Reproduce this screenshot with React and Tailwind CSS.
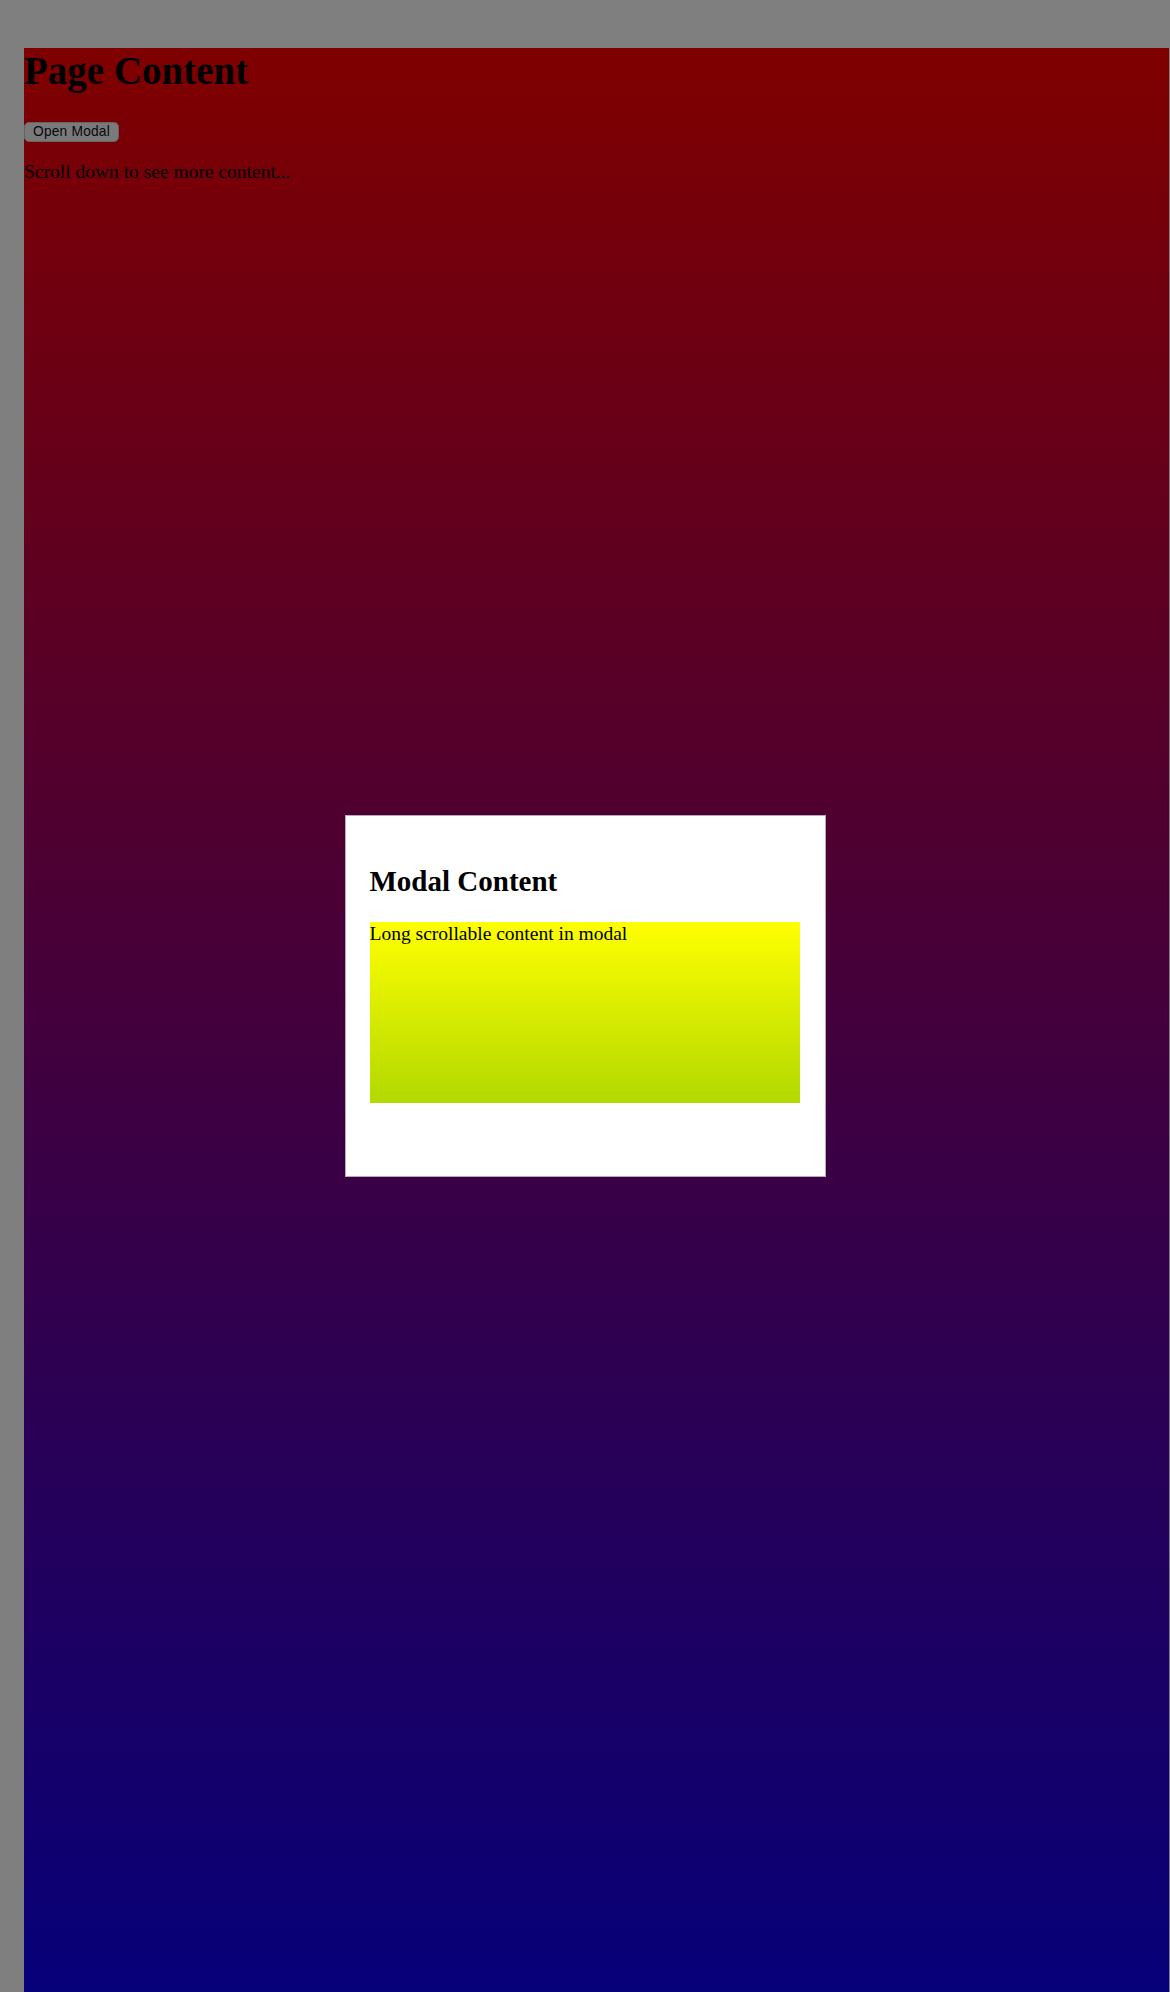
export default function App() {
  return (
    <div className="relative min-h-screen bg-white" style={{ fontFamily: '"Liberation Serif", serif' }}>
      <div className="pt-[49px] pl-[24px]">
        <div className="w-[1145px] h-[2050px] bg-[linear-gradient(to_bottom,#ff0000,#0000ff)] text-black">
          <h1 className="m-0 -mt-[1px] text-[39px] leading-[46px] font-bold" style={{ fontFamily: '"Liberation Serif", serif' }}>
            Page Content
          </h1>
          <button
            className="mt-[28px] block h-[20px] w-[95px] rounded-[5px] border border-[#c8c8c8] bg-[#f4f4f4] text-[13.75px] leading-[18px] tracking-[0.2px] text-[#111]"
            style={{ fontFamily: '"Liberation Sans", Arial, sans-serif' }}
          >
            Open Modal
          </button>
          <p className="mt-[18px] text-[19.5px] leading-[23px]" style={{ fontFamily: '"Liberation Serif", serif' }}>
            Scroll down to see more content...
          </p>
        </div>
      </div>

      <div className="fixed inset-0 flex items-center justify-center bg-black/50">
        <div className="box-border h-[362px] w-[481px] border border-[#b4adb6] bg-white p-6">
          <h2 className="mt-[24px] mb-[24px] text-[29px] leading-[34px] font-bold text-black" style={{ fontFamily: '"Liberation Serif", serif' }}>
            Modal Content
          </h2>
          <div className="h-[181px] w-[430px] overflow-hidden">
            <div className="h-[600px] bg-[linear-gradient(to_bottom,#ffff00,#008000)]">
              <p className="m-0 text-[19.5px] leading-[23px] text-black" style={{ fontFamily: '"Liberation Serif", serif' }}>
                Long scrollable content in modal
              </p>
            </div>
          </div>
        </div>
      </div>
    </div>
  );
}
